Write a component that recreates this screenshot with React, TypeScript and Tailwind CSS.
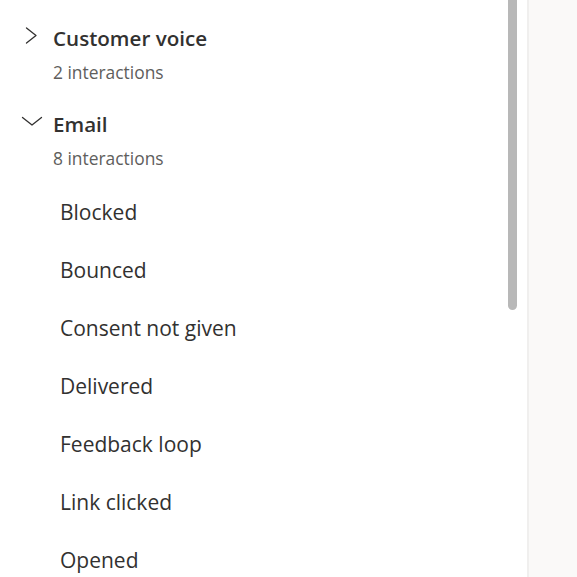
import React from 'react';

const emailItems = [
  'Blocked',
  'Bounced',
  'Consent not given',
  'Delivered',
  'Feedback loop',
  'Link clicked',
  'Opened',
];

function Chevron({ open }: { open: boolean }) {
  return (
    <svg width="53" height="28" viewBox="0 0 53 28" fill="none">
      {open ? (
        <path d="M22.5 7.5 L32 15 L41.5 7.5" stroke="#323130" strokeWidth="1.3" strokeLinecap="round" strokeLinejoin="round" />
      ) : (
        <path d="M26.5 4 L36 11.5 L26.5 19" stroke="#323130" strokeWidth="1.3" strokeLinecap="round" strokeLinejoin="round" />
      )}
    </svg>
  );
}

function Group({ title, count, open }: { title: string; count: string; open: boolean }) {
  return (
    <div className="flex flex-col">
      <div className="flex items-center h-[28px]">
        <Chevron open={open} />
        <span className="text-[20.6px] font-semibold text-[#323130] leading-[28px]">{title}</span>
      </div>
      <div className="pl-[53px] mt-[8px] text-[17.4px] leading-[24px] text-[#605e5c]">{count}</div>
    </div>
  );
}

export default function App() {
  return (
    <div className="w-[577px] h-[577px] flex overflow-hidden bg-white" style={{ fontFamily: '"Open Sans", "Noto Sans", sans-serif' }}>
      <div className="relative w-[527px] h-full bg-white">
        <div className="flex flex-col pt-[24px]">
          <Group title="Customer voice" count="2 interactions" open={false} />
          <div className="mt-[26px]">
            <Group title="Email" count="8 interactions" open={true} />
          </div>
          <div className="flex flex-col mt-[14px]">
            {emailItems.map((item) => (
              <div key={item} className="h-[58px] flex items-center pl-[60px] text-[21px] text-[#323130]">
                {item}
              </div>
            ))}
          </div>
        </div>
        {/* scrollbar thumb */}
        <div className="absolute left-[508px] top-0 w-[9px] h-[310px] bg-[#b8b8b8] rounded-b-full" />
      </div>
      <div className="flex-1 h-full bg-[#faf9f8] border-l-2 border-[#f0efee]" />
    </div>
  );
}
